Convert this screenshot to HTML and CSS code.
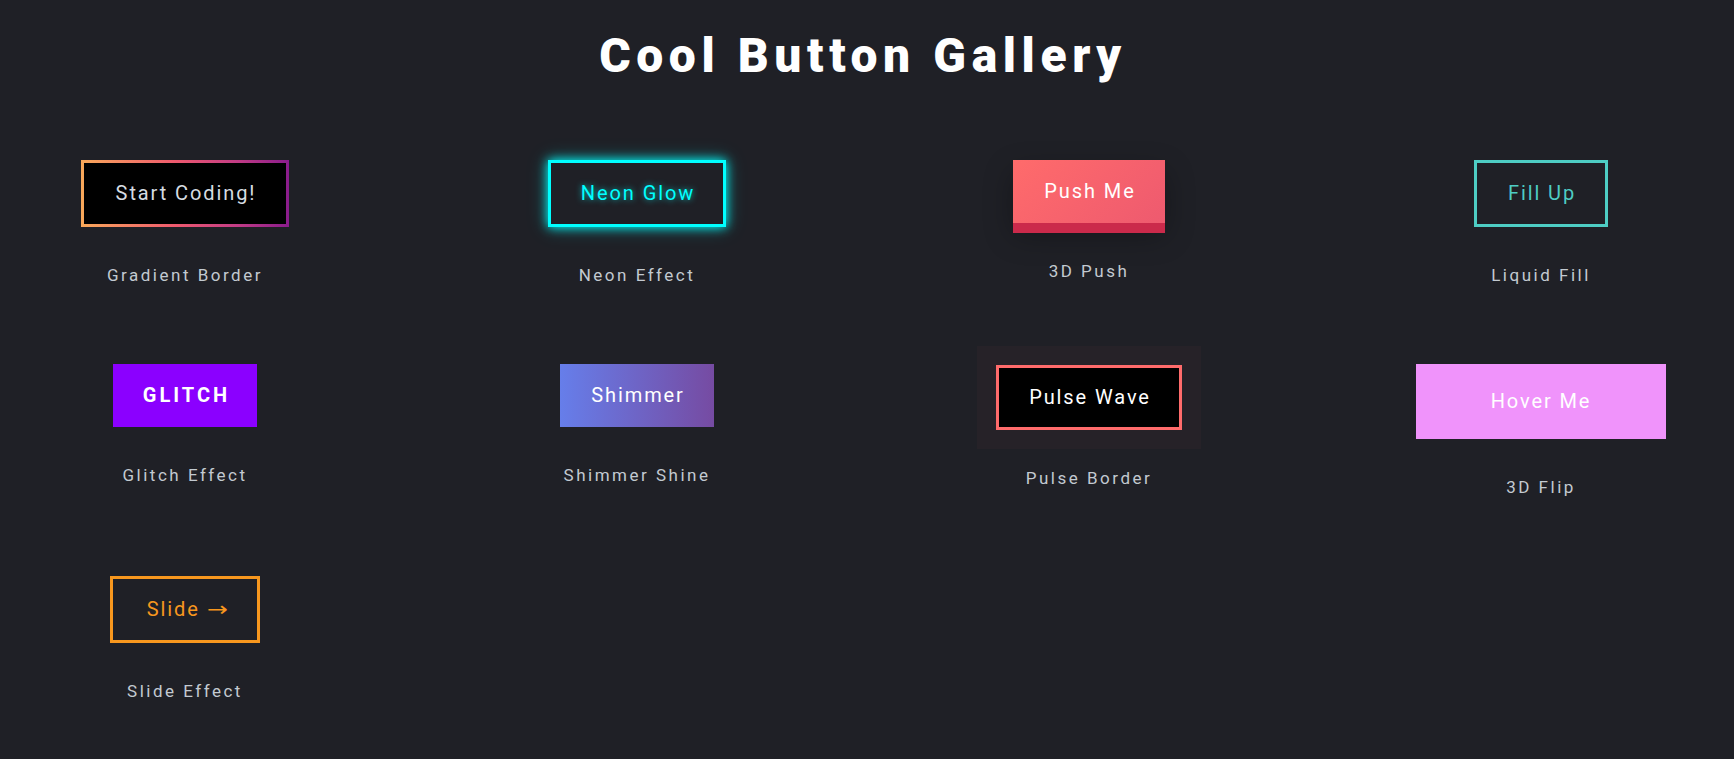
FILE: index.html
```html
<!DOCTYPE html>
<html lang="en">

<head>
    <meta charset="UTF-8">
    <meta name="viewport" content="width=device-width, initial-scale=1.0">
    <title>Cool Button Gallery</title>
    <link rel="stylesheet" href="styles.css">
</head>

<body>
    <h1>Cool Button Gallery</h1>

    <div class="gallery">
        <div class="item">
            <button class="btn btn-gradient">Start Coding!</button>
            <p class="label">Gradient Border</p>
        </div>
        <div class="item">
            <button class="btn btn-neon">Neon Glow</button>
            <p class="label">Neon Effect</p>
        </div>
        <div class="item">
            <button class="btn btn-push">Push Me</button>
            <p class="label">3D Push</p>
        </div>
        <div class="item">
            <button class="btn btn-fill">Fill Up</button>
            <p class="label">Liquid Fill</p>
        </div>

        <div class="item">
            <button class="btn btn-glitch">Glitch</button>
            <p class="label">Glitch Effect</p>
        </div>
        <div class="item">
            <button class="btn btn-shimmer">Shimmer</button>
            <p class="label">Shimmer Shine</p>
        </div>
        <div class="item">
            <button class="btn btn-pulse">Pulse Wave</button>
            <p class="label">Pulse Border</p>
        </div>
        <div class="item">
            <button class="btn btn-flip">Hover Me</button>
            <p class="label">3D Flip</p>
        </div>

        <div class="item">
            <button class="btn btn-slide">Slide <span class="arrow">→</span></button>
            <p class="label">Slide Effect</p>
        </div>
    </div>
</body>

</html>
```

FILE: styles.css
```css
body {
    font-family: Roboto, "Liberation Sans", sans-serif;
    background: #1f2026;
    margin: 0;
    padding: 0 8px 0 0;
}

h1 {
    margin: 27px 0 0;
    font-size: 48px;
    line-height: 58px;
    font-weight: 900;
    letter-spacing: 5.6px;
    text-align: center;
    color: #fff;
}

.gallery {
    display: grid;
    grid-template-columns: repeat(4, 260px);
    justify-content: center;
    column-gap: 192px;
    row-gap: 77px;
    margin-top: 75px;
}

.item {
    display: flex;
    flex-direction: column;
    align-items: center;
}

.label {
    margin: 36px 0 0;
    font-size: 17px;
    line-height: 24px;
    letter-spacing: 2.5px;
    color: #c3cad1;
}

.btn {
    font-family: inherit;
    font-size: 20px;
    line-height: 27px;
    letter-spacing: 1.9px;
    padding: 18px 29px 18px 31px;
    border: none;
    background: none;
    color: #fff;
    cursor: pointer;
}

.btn-gradient {
    padding: 17px 30px 17px 32px;
    border: 3px solid transparent;
    background: linear-gradient(#000, #000) padding-box,
        linear-gradient(90deg, #f9a95a, #ef5a6e 45%, #c23c85 75%, #8a1c8c) border-box;
    color: #d6dce1;
}

.btn-neon {
    padding: 17px 28px 17px 30px;
    border: 3px solid #00ffff;
    color: #00ffff;
    text-shadow: 0 0 6px rgba(0, 255, 255, 0.7);
    box-shadow: 0 0 10px #00ffff, 0 0 18px rgba(0, 255, 255, 0.35);
}

.btn-push {
    background: linear-gradient(135deg, #ff6b6b, #ee5a6f);
    box-shadow: 0 10px 0 #cb2a4b, 0 12px 30px rgba(0, 0, 0, 0.3);
}

.btn-fill {
    padding: 17px 29px 17px 31px;
    border: 3px solid #4ecdc4;
    color: #4ecdc4;
}

.btn-glitch {
    background: #8b00ff;
    font-weight: 700;
    letter-spacing: 3px;
    text-transform: uppercase;
    padding: 18px 27px 18px 30px;
}

.btn-shimmer {
    background: linear-gradient(90deg, #667eea, #764ba2);
}

.btn-pulse {
    margin-top: 1px;
    padding: 16px 28px 16px 30px;
    border: 3px solid #ff6b6b;
    background: #000;
    box-shadow: 0 0 0 19px rgba(255, 107, 107, 0.035);
}

.btn-flip {
    width: 250px;
    height: 75px;
    padding: 0;
    background: #f093fb;
}

.btn-slide {
    padding: 17px 32px 17px 34px;
    border: 3px solid #f7971e;
    color: #f7971e;
}

.arrow {
    display: inline-block;
    font-family: "DejaVu Sans", sans-serif;
    letter-spacing: 0;
    transform: scaleX(1.25);
    margin-left: 2px;
}
```
